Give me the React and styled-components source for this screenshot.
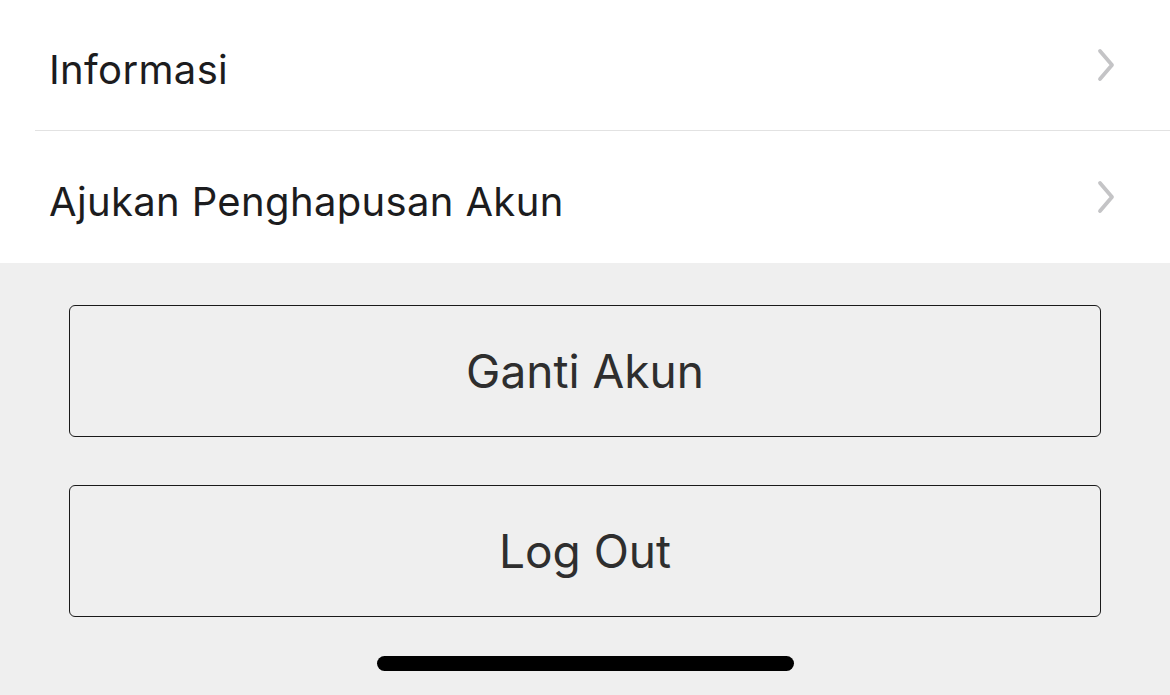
import React from "react";
import styled, { createGlobalStyle } from "styled-components";

const GlobalStyle = createGlobalStyle`
  html, body {
    margin: 0;
    padding: 0;
    background: #efefef;
    font-family: Inter, "Noto Sans", sans-serif;
  }
`;

const Screen = styled.div`
  width: 1170px;
  height: 695px;
  display: flex;
  flex-direction: column;
  background: #efefef;
  overflow: hidden;
`;

const List = styled.div`
  background: #ffffff;
  display: flex;
  flex-direction: column;
`;

const Row = styled.div`
  height: ${props => props.height}px;
  display: flex;
  align-items: center;
  justify-content: space-between;
  padding: 0 54px 0 49px;
  box-sizing: border-box;
`;

const Divider = styled.div`
  height: 1px;
  margin-left: 35px;
  background: #e2e2e2;
`;

const Label = styled.span`
  font-size: 40px;
  color: #1c1c1e;
  padding-top: 8px;
  letter-spacing: 0.35px;
`;

const Chevron = styled.svg`
  width: 20px;
  height: 36px;
  flex-shrink: 0;
`;

const Actions = styled.div`
  flex: 1;
  display: flex;
  flex-direction: column;
  align-items: center;
  padding-top: 42px;
`;

const ButtonGroup = styled.div`
  display: flex;
  flex-direction: column;
  gap: 48px;
`;

const Button = styled.button`
  width: 1032px;
  height: 132px;
  background: transparent;
  border: 1.5px solid #1a1a1a;
  border-radius: 6px;
  font-family: Inter, "Noto Sans", sans-serif;
  font-size: 46px;
  color: #2e2e2e;
  display: flex;
  align-items: center;
  justify-content: center;
  padding: 0;
`;

const HomeBar = styled.div`
  margin-top: 39px;
  width: 417px;
  height: 15px;
  border-radius: 8px;
  background: #000;
`;

const ChevronIcon = () => (
  <Chevron viewBox="0 0 20 36">
    <path
      d="M4 4 L16 18 L4 32"
      fill="none"
      stroke="#c4c4c6"
      strokeWidth="3.8"
      strokeLinecap="round"
      strokeLinejoin="round"
    />
  </Chevron>
);

const items = ["Informasi", "Ajukan Penghapusan Akun"];

export default function App() {
  return (
    <Screen>
      <GlobalStyle />
      <List>
        <Row height={130}>
          <Label>{items[0]}</Label>
          <ChevronIcon />
        </Row>
        <Divider />
        <Row height={132}>
          <Label>{items[1]}</Label>
          <ChevronIcon />
        </Row>
      </List>
      <Actions>
        <ButtonGroup>
          <Button>Ganti Akun</Button>
          <Button>Log Out</Button>
        </ButtonGroup>
        <HomeBar />
      </Actions>
    </Screen>
  );
}
